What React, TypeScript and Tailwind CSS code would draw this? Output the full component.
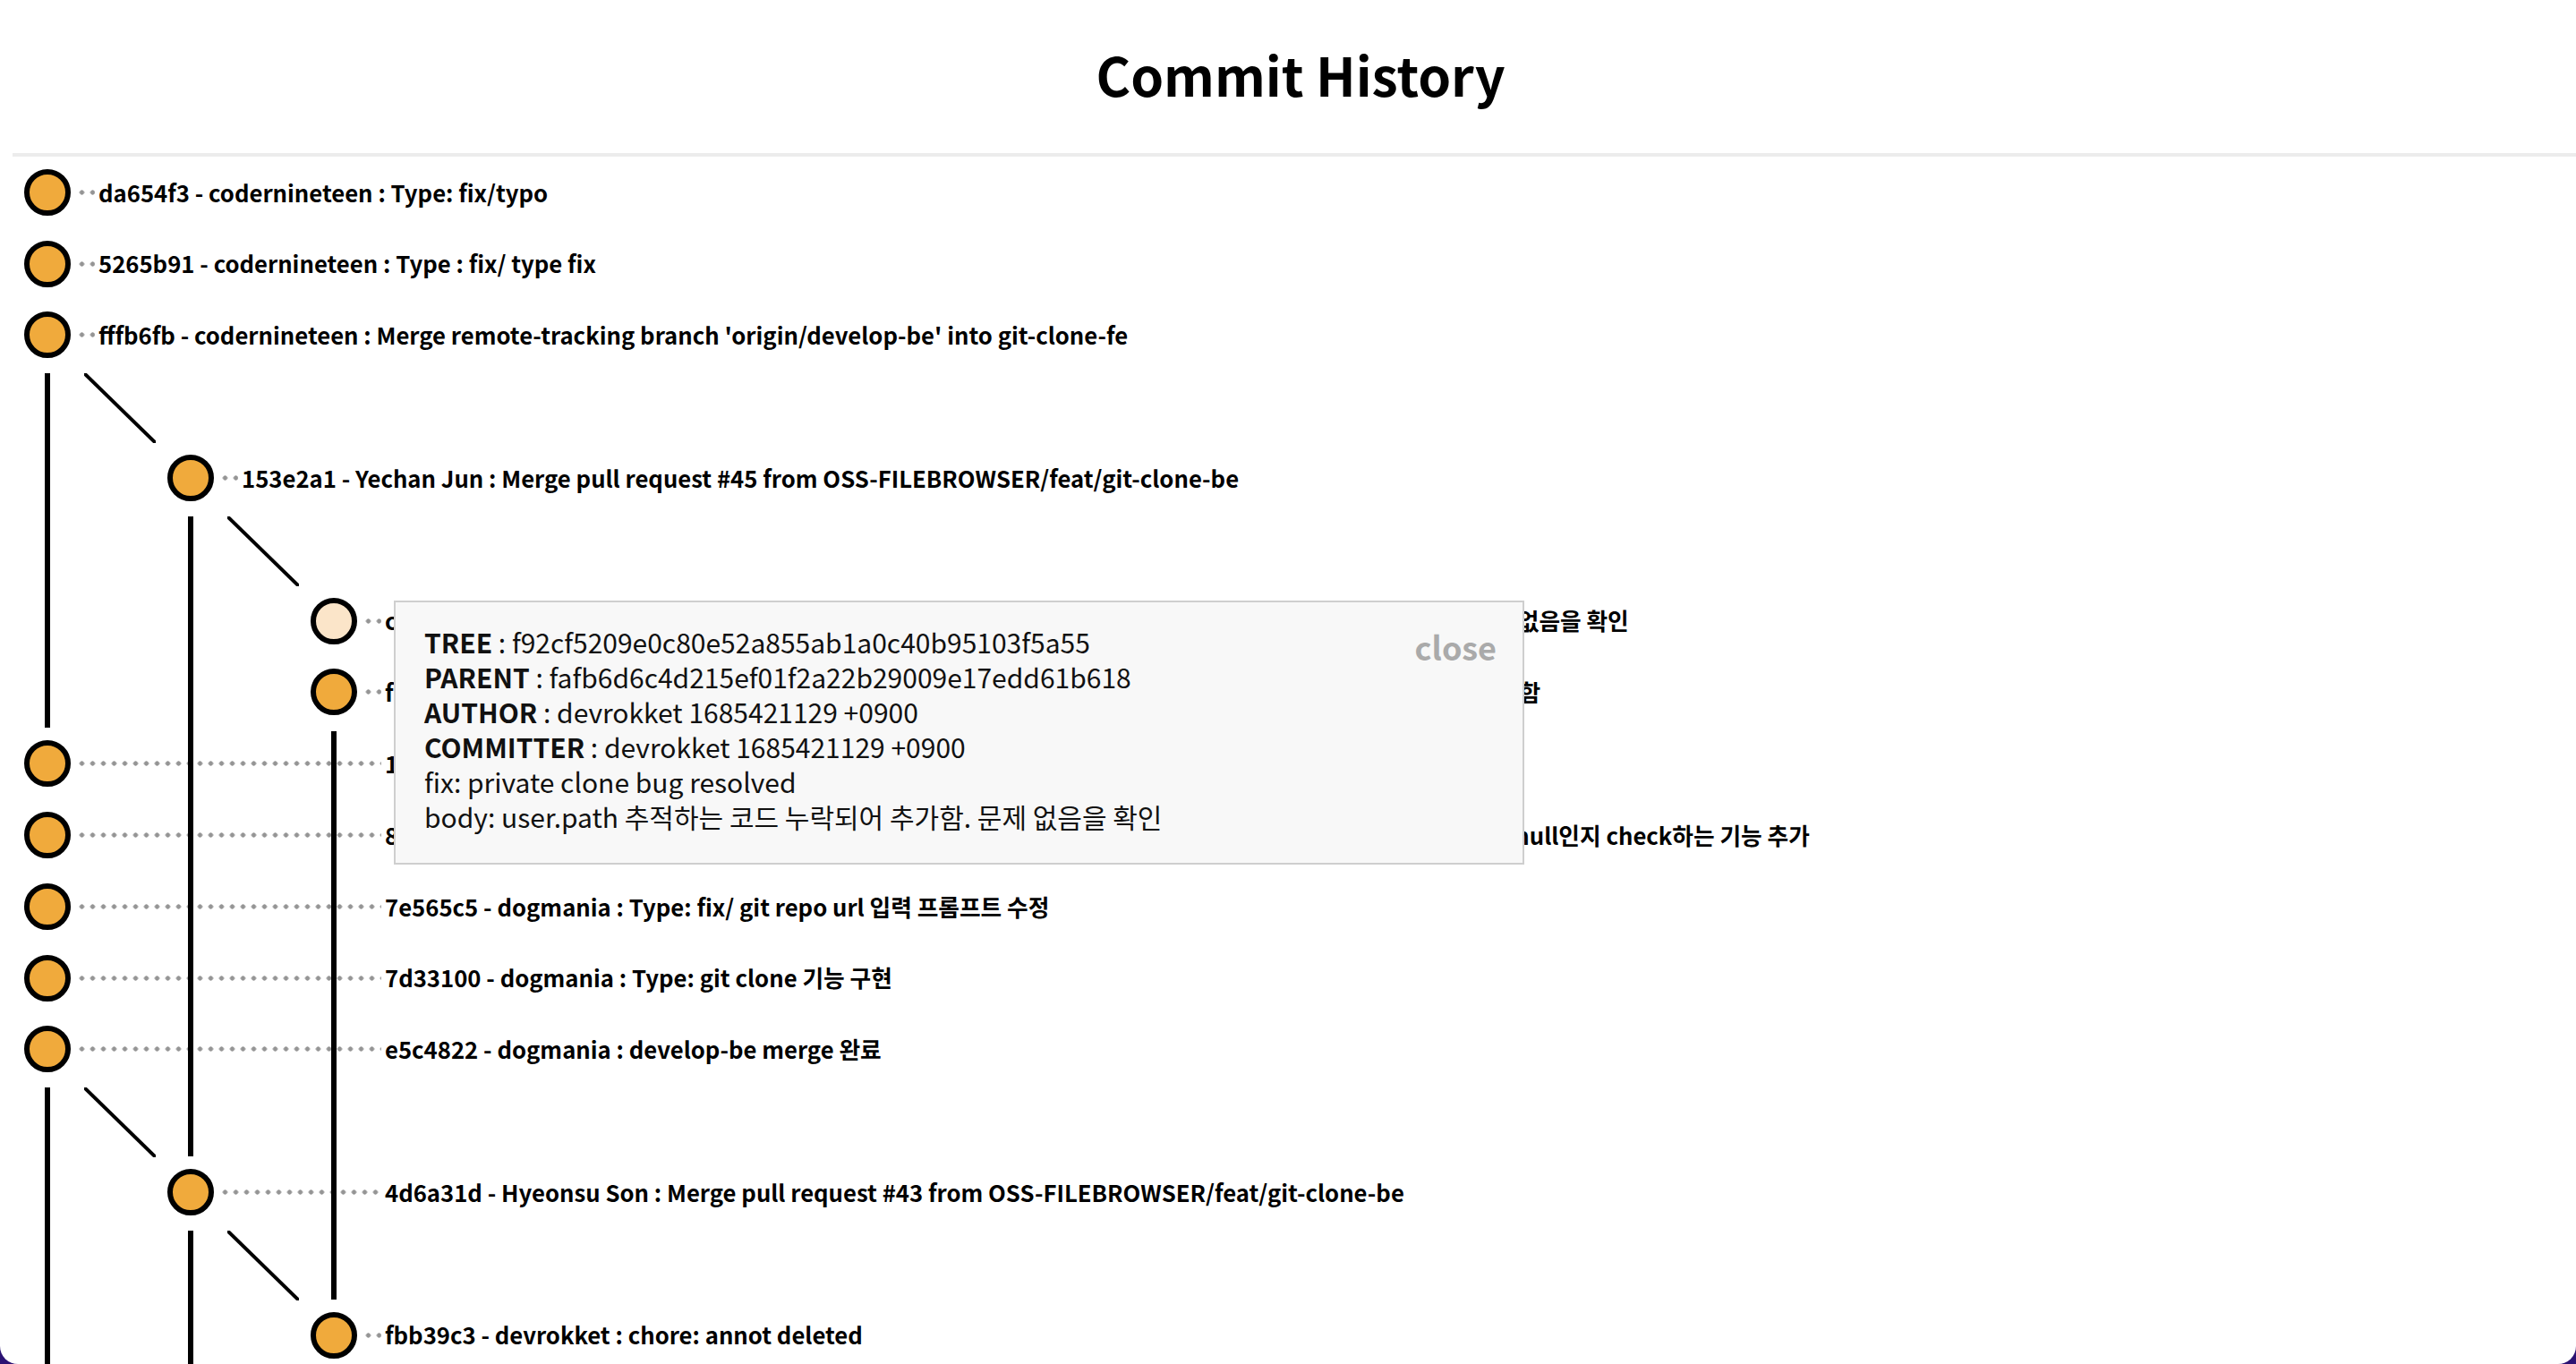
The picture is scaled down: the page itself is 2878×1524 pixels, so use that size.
import React from "react";

type Commit = {
  kind: "commit";
  lane: number;
  pass: number[];
  max: number;
  text: string;
  selected?: boolean;
  startsBelow?: number; // lane whose line begins in this row (just under a node)
};
type Link = { kind: "link"; from: number; lines: number[] };
type Row = Commit | Link;

// full class names per lane (lane spacing is 160px)
const lineLeft = ["left-[23px]", "left-[183px]", "left-[343px]"];
const diagLeft = ["left-[67px]", "left-[227px]"];
const spacer = ["w-0", "w-[160px]", "w-[320px]"];
const filler = ["w-[19px]", "w-[179px]", "w-[339px]"];

const rows: Row[] = [
  { kind: "commit", lane: 0, pass: [], max: 0, text: "da654f3 - codernineteen : Type: fix/typo" },
  { kind: "commit", lane: 0, pass: [], max: 0, text: "5265b91 - codernineteen : Type : fix/ type fix" },
  {
    kind: "commit",
    lane: 0,
    pass: [],
    max: 0,
    text: "fffb6fb - codernineteen : Merge remote-tracking branch 'origin/develop-be' into git-clone-fe",
  },
  { kind: "link", from: 0, lines: [0] },
  {
    kind: "commit",
    lane: 1,
    pass: [0],
    max: 1,
    text: "153e2a1 - Yechan Jun : Merge pull request #45 from OSS-FILEBROWSER/feat/git-clone-be",
  },
  { kind: "link", from: 1, lines: [0, 1] },
  {
    kind: "commit",
    lane: 2,
    pass: [0, 1],
    max: 2,
    selected: true,
    text: "c1f0b4e - devrokket : fix: private clone bug resolved - body: user.path 추적하는 코드 누락되어 추가함. 문제 없음을 확인",
  },
  {
    kind: "commit",
    lane: 2,
    pass: [0, 1],
    max: 2,
    text: "f7d21a9 - devrokket : fix: private clone bug resolved body: user.path 추적하는 코드 누락되어 있던 부분 추가함",
  },
  {
    kind: "commit",
    lane: 0,
    pass: [1, 2],
    max: 2,
    startsBelow: 2,
    text: "1e9b0c2 - dogmania : Type: git clone 경로 설정 기능 구현",
  },
  {
    kind: "commit",
    lane: 0,
    pass: [1, 2],
    max: 2,
    text: "8a2f61d - dogmania : Type: feat/ private git repository 여부 확인 후 사용자에게 입력받은 access token 값이 null인지 check하는 기능 추가",
  },
  { kind: "commit", lane: 0, pass: [1, 2], max: 2, text: "7e565c5 - dogmania : Type: fix/ git repo url 입력 프롬프트 수정" },
  { kind: "commit", lane: 0, pass: [1, 2], max: 2, text: "7d33100 - dogmania : Type: git clone 기능 구현" },
  { kind: "commit", lane: 0, pass: [1, 2], max: 2, text: "e5c4822 - dogmania : develop-be merge 완료" },
  { kind: "link", from: 0, lines: [0, 1, 2] },
  {
    kind: "commit",
    lane: 1,
    pass: [0, 2],
    max: 2,
    text: "4d6a31d - Hyeonsu Son : Merge pull request #43 from OSS-FILEBROWSER/feat/git-clone-be",
  },
  { kind: "link", from: 1, lines: [0, 1, 2] },
  { kind: "commit", lane: 2, pass: [0, 1], max: 2, text: "fbb39c3 - devrokket : chore: annot deleted" },
];

function CommitRow({ row }: { row: Commit }) {
  return (
    <div className="relative flex h-[79.8px] items-center">
      {/* lanes passing through this row */}
      {row.pass.map((l) => (
        <div
          key={l}
          className={[
            "absolute bottom-0 w-[6px] bg-black",
            lineLeft[l],
            row.startsBelow === l ? "top-[4px]" : "top-0",
          ].join(" ")}
        />
      ))}
      <div className={`shrink-0 ${spacer[row.lane]}`} />
      <div
        className={[
          "h-[52px] w-[52px] shrink-0 rounded-full border-[6px] border-black",
          row.selected ? "bg-[#fbe5c9]" : "bg-[#f0aa3c]",
        ].join(" ")}
      />
      <div
        className={`ml-[8px] mr-[4px] h-[6px] shrink-0 bg-[radial-gradient(circle,#959595_2.4px,transparent_2.9px)] bg-[length:12px_6px] bg-[position:-1.5px_0] bg-repeat-x ${filler[row.max - row.lane]}`}
      />
      <span className="whitespace-nowrap text-[25.7px] font-bold text-black">{row.text}</span>
    </div>
  );
}

function LinkRow({ row }: { row: Link }) {
  return (
    <div className="relative h-[79.8px]">
      {row.lines.map((l) => (
        <div
          key={l}
          className={[
            "absolute bottom-0 w-[6px] bg-black",
            lineLeft[l],
            l === row.from ? "top-[3px]" : "top-0",
          ].join(" ")}
        />
      ))}
      <svg
        className={`absolute top-[3px] ${diagLeft[row.from]}`}
        width="80"
        height="78"
        viewBox="0 0 80 78"
        aria-hidden="true"
      >
        <line x1="0" y1="0" x2="80" y2="78" stroke="black" strokeWidth="4" />
      </svg>
    </div>
  );
}

function DetailPopup() {
  return (
    <div className="absolute left-[440px] top-[671px] flex h-[295px] w-[1263px] border-2 border-[#cfcfcf] bg-[#f8f8f8] pl-[32px] pr-[29px] pt-[25px] text-[30px] leading-[39px] text-[#111]">
      <div className="flex-1 whitespace-nowrap">
        <div>
          <b>TREE</b> : f92cf5209e0c80e52a855ab1a0c40b95103f5a55
        </div>
        <div>
          <b>PARENT</b> : fafb6d6c4d215ef01f2a22b29009e17edd61b618
        </div>
        <div>
          <b>AUTHOR</b> : devrokket 1685421129 +0900
        </div>
        <div>
          <b>COMMITTER</b> : devrokket 1685421129 +0900
        </div>
        <div>fix: private clone bug resolved</div>
        <div>body: user.path 추적하는 코드 누락되어 추가함. 문제 없음을 확인</div>
      </div>
      <span className="cursor-pointer self-start text-[36px] font-bold leading-[49px] text-[#aaaaaa]">close</span>
    </div>
  );
}

export default function App() {
  return (
    <div className="h-screen bg-[#2b1273]">
      <div className="relative h-full overflow-hidden rounded-b-[20px] bg-white font-['Noto_Sans_CJK_KR','Noto_Sans',sans-serif]">
        <div className="ml-[14px] w-full">
          <h1 className="pt-[43px] pb-[48px] text-center text-[59px] font-bold leading-[80px] text-black">
            Commit History
          </h1>
          <div className="h-[4px] bg-[#ececec]" />
          <div className="pl-[13px]">
            {rows.map((r, i) =>
              r.kind === "commit" ? <CommitRow key={i} row={r} /> : <LinkRow key={i} row={r} />
            )}
          </div>
        </div>
        <DetailPopup />
      </div>
    </div>
  );
}
